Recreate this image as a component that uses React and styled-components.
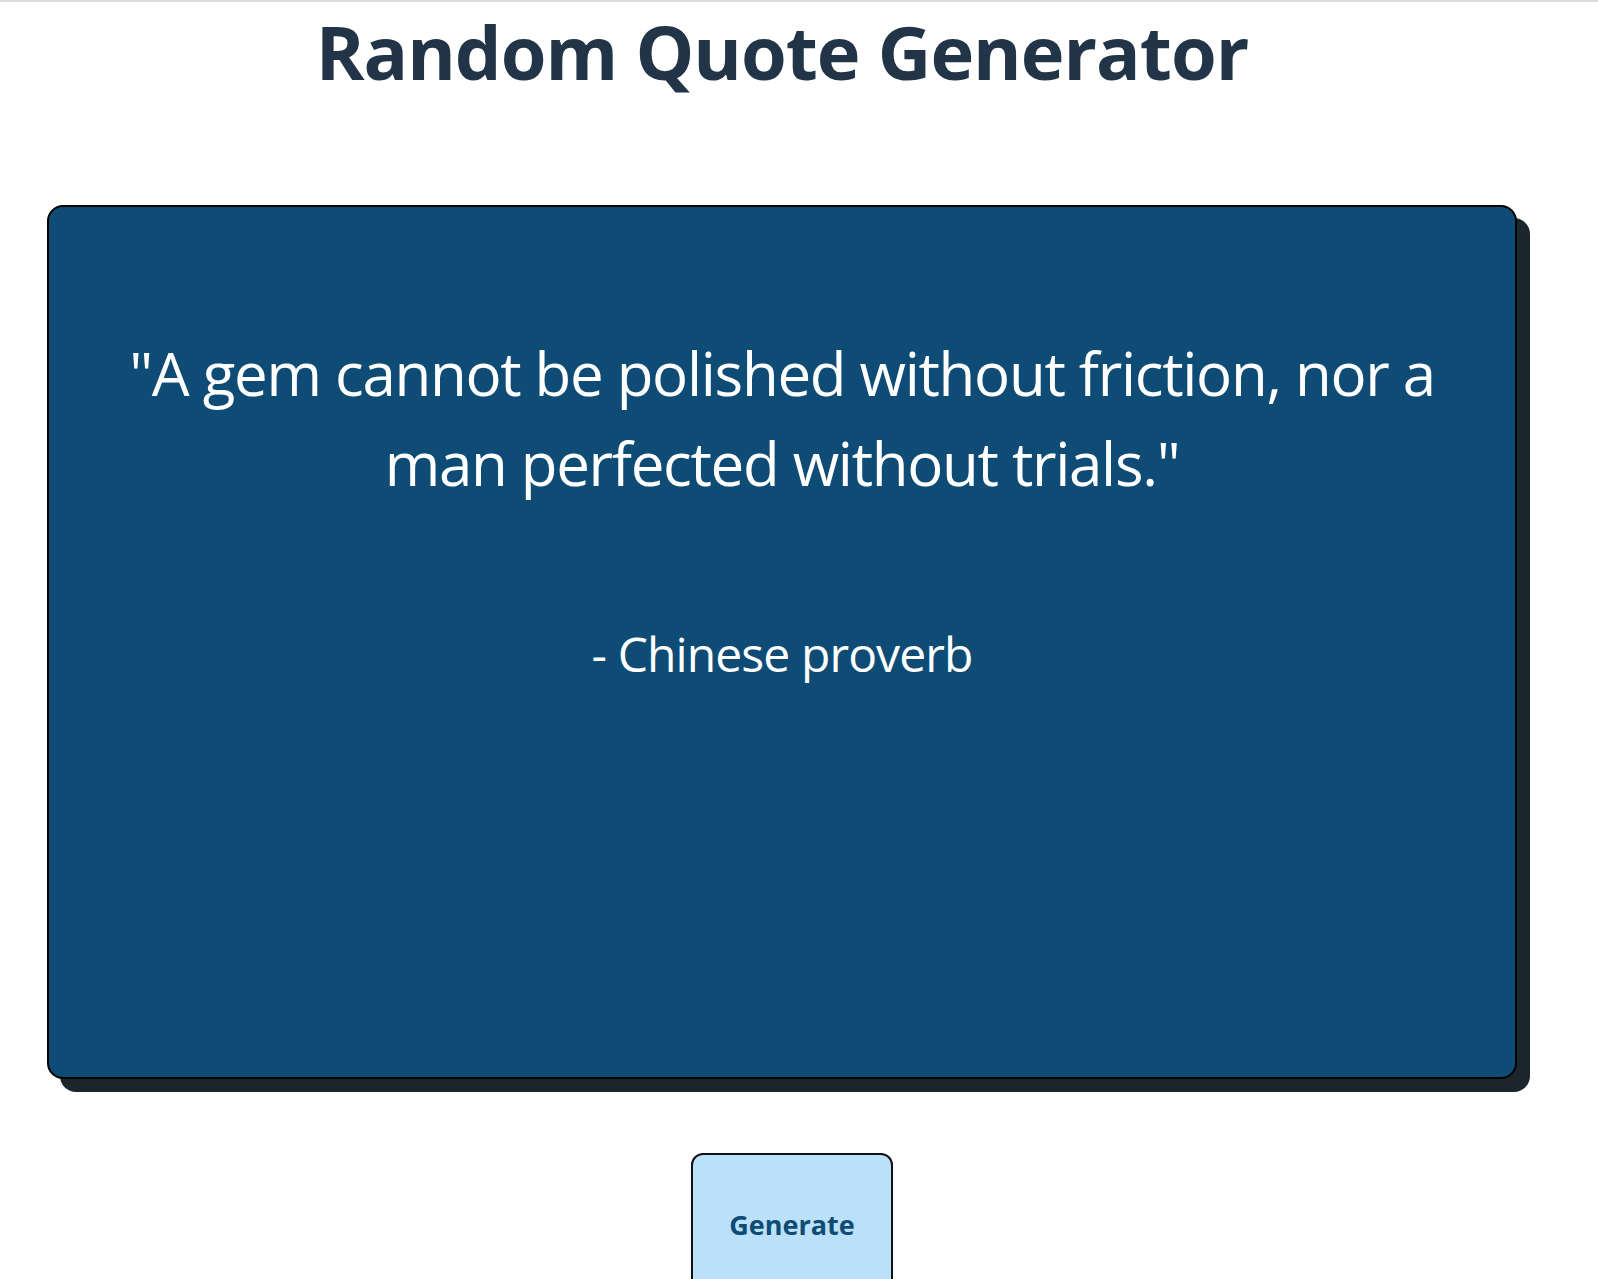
import React from "react";
import styled, { createGlobalStyle } from "styled-components";

const GlobalStyle = createGlobalStyle`
  html, body {
    margin: 0;
    padding: 0;
    background: #ffffff;
  }
  body {
    font-family: "Open Sans", "Noto Sans", sans-serif;
    border-top: 2px solid #dddddd;
    overflow: hidden;
  }
`;

const Page = styled.main`
  width: 1564px;
  display: flex;
  flex-direction: column;
  align-items: center;
`;

const Title = styled.h1`
  margin: 0;
  font-size: 74px;
  font-weight: 700;
  line-height: 100px;
  color: #223447;
  letter-spacing: -1px;
`;

const Card = styled.section`
  box-sizing: border-box;
  width: 1470px;
  height: 874px;
  margin-top: 103px;
  padding: 121px 60px 0;
  background: #0f4c75;
  border: 2px solid #000;
  border-radius: 16px;
  box-shadow: 13px 13px 0 #1b262c;
  color: #ffffff;
  text-align: center;
`;

const Quote = styled.p`
  margin: 0;
  font-size: 60px;
  line-height: 90px;
  font-weight: 400;
  letter-spacing: -1.3px;
`;

const Author = styled.p`
  margin: 116px 0 0;
  font-size: 48px;
  line-height: 60px;
  letter-spacing: -0.9px;
`;

const Generate = styled.button`
  box-sizing: border-box;
  width: 202px;
  height: 142px;
  margin-top: 74px;
  margin-left: 20px;
  background: #bbe1fa;
  border: 2px solid #111;
  border-radius: 12px;
  color: #0f4c75;
  font-family: inherit;
  font-size: 27px;
  font-weight: 700;
  cursor: pointer;
`;

const quote = {
  text: "A gem cannot be polished without friction, nor a man perfected without trials.",
  author: "Chinese proverb",
};

export default function App() {
  return (
    <>
      <GlobalStyle />
      <Page>
        <Title>Random Quote Generator</Title>
        <Card>
          <Quote>{`"${quote.text}"`}</Quote>
          <Author>{`- ${quote.author}`}</Author>
        </Card>
        <Generate>Generate</Generate>
      </Page>
    </>
  );
}
